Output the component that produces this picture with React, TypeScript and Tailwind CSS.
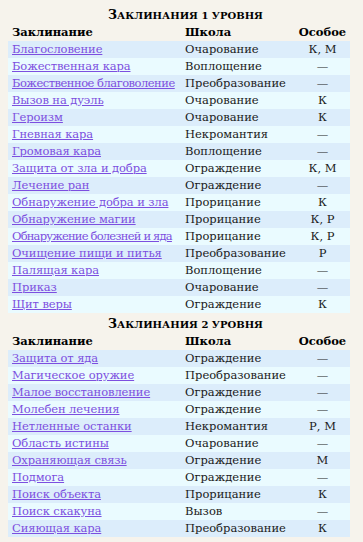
import React from 'react';

type Spell = { name: string; school: string; special: string };

const level1: Spell[] = [
  { name: 'Благословение', school: 'Очарование', special: 'К, М' },
  { name: 'Божественная кара', school: 'Воплощение', special: '—' },
  { name: 'Божественное благоволение', school: 'Преобразование', special: '—' },
  { name: 'Вызов на дуэль', school: 'Очарование', special: 'К' },
  { name: 'Героизм', school: 'Очарование', special: 'К' },
  { name: 'Гневная кара', school: 'Некромантия', special: '—' },
  { name: 'Громовая кара', school: 'Воплощение', special: '—' },
  { name: 'Защита от зла и добра', school: 'Ограждение', special: 'К, М' },
  { name: 'Лечение ран', school: 'Ограждение', special: '—' },
  { name: 'Обнаружение добра и зла', school: 'Прорицание', special: 'К' },
  { name: 'Обнаружение магии', school: 'Прорицание', special: 'К, Р' },
  { name: 'Обнаружение болезней и яда', school: 'Прорицание', special: 'К, Р' },
  { name: 'Очищение пищи и питья', school: 'Преобразование', special: 'Р' },
  { name: 'Палящая кара', school: 'Воплощение', special: '—' },
  { name: 'Приказ', school: 'Очарование', special: '—' },
  { name: 'Щит веры', school: 'Ограждение', special: 'К' },
];

const level2: Spell[] = [
  { name: 'Защита от яда', school: 'Ограждение', special: '—' },
  { name: 'Магическое оружие', school: 'Преобразование', special: '—' },
  { name: 'Малое восстановление', school: 'Ограждение', special: '—' },
  { name: 'Молебен лечения', school: 'Ограждение', special: '—' },
  { name: 'Нетленные останки', school: 'Некромантия', special: 'Р, М' },
  { name: 'Область истины', school: 'Очарование', special: '—' },
  { name: 'Охраняющая связь', school: 'Ограждение', special: 'М' },
  { name: 'Подмога', school: 'Ограждение', special: '—' },
  { name: 'Поиск объекта', school: 'Прорицание', special: 'К' },
  { name: 'Поиск скакуна', school: 'Вызов', special: '—' },
  { name: 'Сияющая кара', school: 'Преобразование', special: 'К' },
];

const SpellTable = ({ level, spells }: { level: number; spells: Spell[] }) => (
  <div>
    <div className="h-[18px] flex items-baseline justify-center font-bold text-black">
      <span className="text-[12.5px]">З</span>
      <span className="text-[10px]">АКЛИНАНИЯ {level} УРОВНЯ</span>
    </div>
    <table className="w-[342px] table-fixed border-collapse text-[11.5px] leading-[17px]">
      <colgroup>
        <col className="w-[177px]" />
        <col className="w-[110px]" />
        <col className="w-[55px]" />
      </colgroup>
      <thead>
        <tr className="h-[16px] font-bold text-black">
          <th className="pl-1 text-left">Заклинание</th>
          <th className="text-left">Школа</th>
          <th className="text-center">Особое</th>
        </tr>
      </thead>
      <tbody>
        {spells.map((s, i) => (
          <tr key={s.name} className={i % 2 === 0 ? 'h-[17px] bg-[#dcedfb]' : 'h-[17px] bg-[#eafbff]'}>
            <td className="pl-1 whitespace-nowrap overflow-hidden">
              <a
                href="#"
                className={
                  s.name.length > 25
                    ? 'text-[#7c4fe0] underline tracking-[-0.8px]'
                    : s.name.length > 24
                      ? 'text-[#7c4fe0] underline tracking-[-0.5px]'
                      : 'text-[#7c4fe0] underline tracking-[-0.1px]'
                }
              >
                {s.name}
              </a>
            </td>
            <td className="whitespace-nowrap text-[#1a1a1a]">{s.school}</td>
            <td className="text-center text-[#1a1a1a]">{s.special}</td>
          </tr>
        ))}
      </tbody>
    </table>
  </div>
);

export default function App() {
  return (
    <div
      className="w-[363px] h-[542px] overflow-hidden bg-[#f6f3ec] pl-2 pt-[6px]"
      style={{ fontFamily: '"DejaVu Serif", "Liberation Serif", serif' }}
    >
      <SpellTable level={1} spells={level1} />
      <div className="h-[2px]" />
      <SpellTable level={2} spells={level2} />
    </div>
  );
}
